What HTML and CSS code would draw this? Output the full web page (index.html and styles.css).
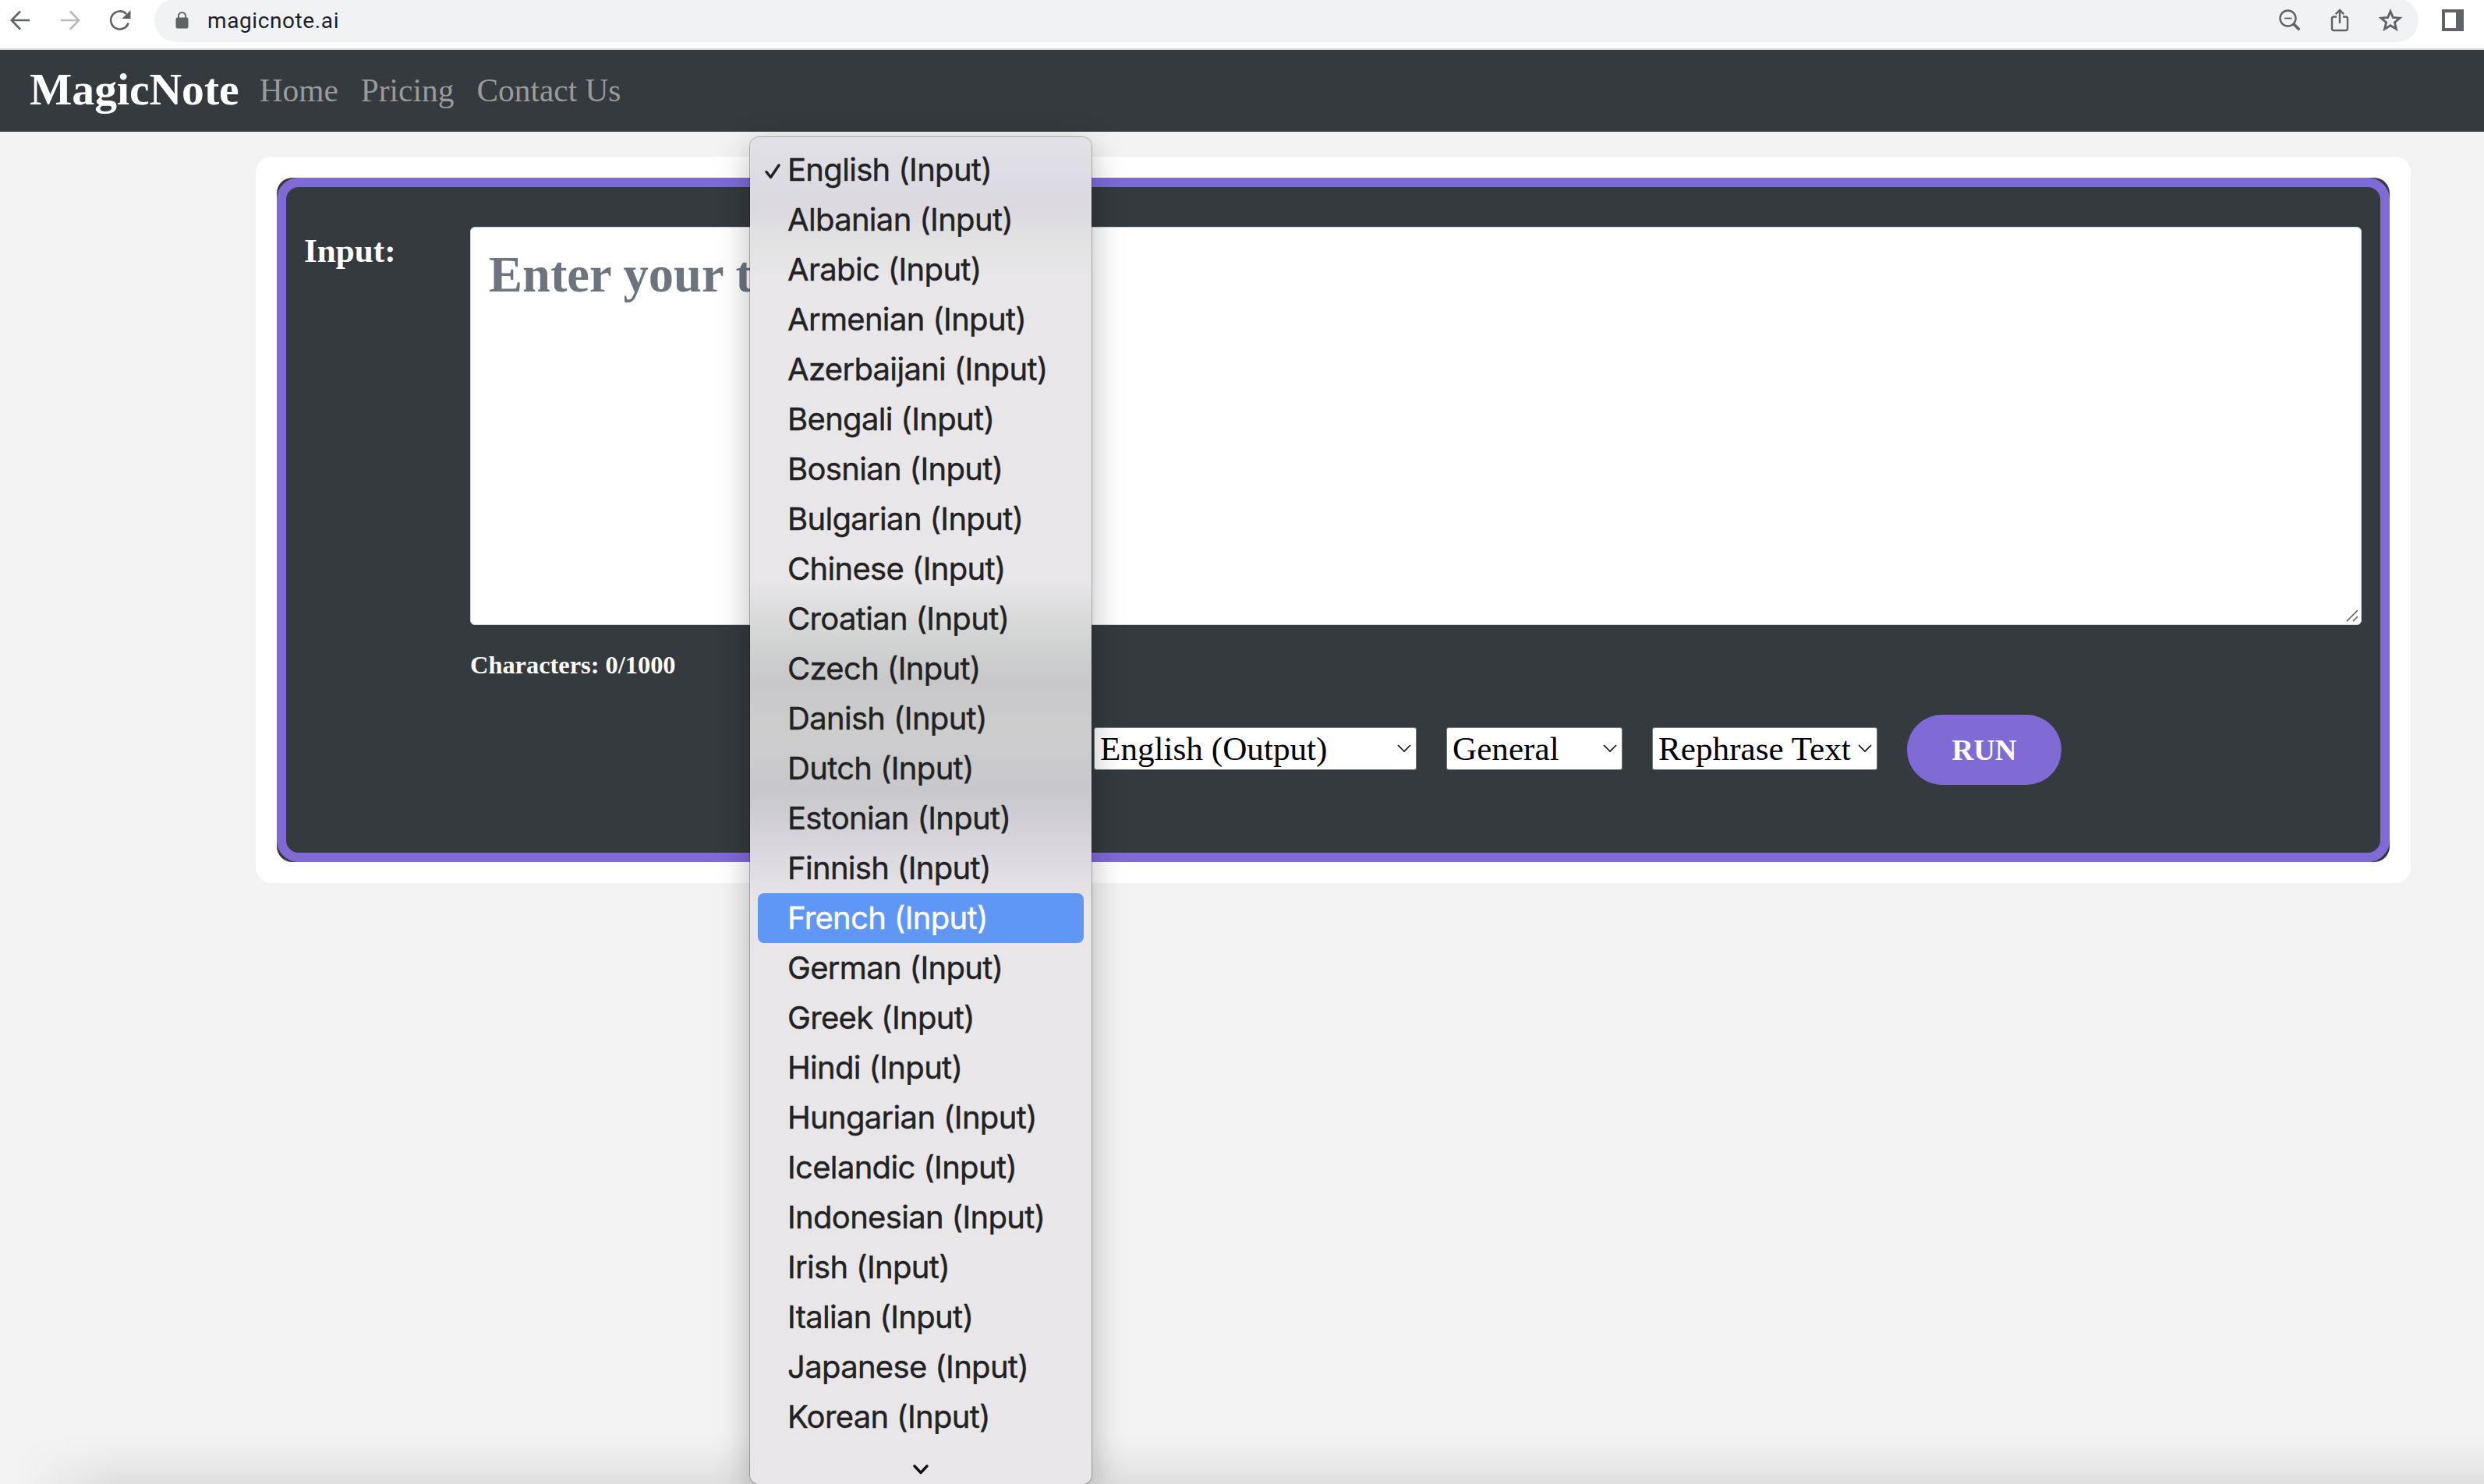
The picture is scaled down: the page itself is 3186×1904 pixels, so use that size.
FILE: index.html
```html
<!DOCTYPE html>
<html lang="en">
<head>
    <meta charset="UTF-8">
    <meta name="viewport" content="width=device-width, initial-scale=1.0">
    <title>MagicNote</title>
    <link rel="stylesheet" href="styles.css">
</head>
<body>
    <div class="browser-bar">
        <svg class="bar-icon" width="26" height="26" viewBox="0 0 26 26"><path d="M25 13H2M13 1.5L1.8 13L13 24.5"/></svg>
        <svg class="bar-icon forward" width="26" height="26" viewBox="0 0 26 26"><path d="M1 13h23M13 1.5L24.2 13L13 24.5"/></svg>
        <svg class="bar-icon reload" width="28" height="28" viewBox="0 0 28 28"><path d="M24.6 17.5A11.5 11.5 0 1 1 22 6"/><path class="solid" d="M27.5 1v11h-11z"/></svg>
        <div class="address">
            <svg class="lock" width="17" height="22" viewBox="0 0 17 22"><path d="M4 9V5.5a4.5 4.5 0 0 1 9 0V9"/><rect x="0.5" y="7.5" width="16" height="14" rx="2"/></svg>
            <span class="url">magicnote.ai</span>
            <div class="address-icons">
                <svg class="bar-icon" width="28" height="28" viewBox="0 0 28 28"><circle cx="11.5" cy="11.5" r="10" stroke-width="2.4"/><path stroke-width="1.8" d="M7 11.5h9.5"/><path stroke-width="3.6" d="M18.8 18.8l7.4 7.4"/></svg>
                <svg class="bar-icon" width="24" height="30" viewBox="0 0 24 30"><path stroke-width="2.4" d="M8 10.5H4.5a2.5 2.5 0 0 0-2.5 2.5V25.500a2.500 2.500 0 0 0 2.500 2.500h15a2.500 2.500 0 0 0 2.500-2.500V13a2.500 2.500 0 0 0-2.500-2.500H16M12 19V2.500M6.800 7.200L12 2l5.200 5.200"/></svg>
                <svg class="bar-icon" width="30" height="30" viewBox="0 0 30 30"><path stroke-width="2.8" d="M15 3.500l3.300 7.900 8.800.7-6.700 5.700 2.100 8.500L15 21.700l-7.500 4.600 2.100-8.500-6.700-5.700 8.800-.7z"/></svg>
            </div>
        </div>
        <div class="side-panel"></div>
    </div>

    <nav class="navbar">
        <a class="brand">MagicNote</a>
        <a class="nav-link">Home</a>
        <a class="nav-link">Pricing</a>
        <a class="nav-link">Contact Us</a>
    </nav>

    <main class="card">
        <div class="panel">
            <form class="panel-frame">
                <label class="input-label">Input:</label>
                <div class="input-column">
                    <div class="text-box">
                        Enter your t
                        <svg class="grip" width="16" height="16" viewBox="0 0 16 16"><path d="M1 15L15 1M9 15l6-6"/></svg>
                    </div>
                    <div class="counter">Characters: 0/1000</div>
                </div>
                <div class="controls">
                    <div class="input-language">
                        <ul class="menu">
                            <li class="checked"><svg class="check" width="20" height="20" viewBox="0 0 20 20"><path d="M2 10.500l5.500 7L18 2"/></svg>English (Input)</li>
                            <li>Albanian (Input)</li>
                            <li>Arabic (Input)</li>
                            <li>Armenian (Input)</li>
                            <li>Azerbaijani (Input)</li>
                            <li>Bengali (Input)</li>
                            <li>Bosnian (Input)</li>
                            <li>Bulgarian (Input)</li>
                            <li>Chinese (Input)</li>
                            <li>Croatian (Input)</li>
                            <li>Czech (Input)</li>
                            <li>Danish (Input)</li>
                            <li>Dutch (Input)</li>
                            <li>Estonian (Input)</li>
                            <li>Finnish (Input)</li>
                            <li class="active">French (Input)</li>
                            <li>German (Input)</li>
                            <li>Greek (Input)</li>
                            <li>Hindi (Input)</li>
                            <li>Hungarian (Input)</li>
                            <li>Icelandic (Input)</li>
                            <li>Indonesian (Input)</li>
                            <li>Irish (Input)</li>
                            <li>Italian (Input)</li>
                            <li>Japanese (Input)</li>
                            <li>Korean (Input)</li>
                            <li class="more"><svg width="20" height="14" viewBox="0 0 20 14"><path d="M2 2l8 8.500L18 2"/></svg></li>
                        </ul>
                    </div>
                    <div class="select output">English (Output)<svg width="18" height="10" viewBox="0 0 18 10"><path d="M1 1l8 8 8-8"/></svg></div>
                    <div class="select tone">General<svg width="18" height="10" viewBox="0 0 18 10"><path d="M1 1l8 8 8-8"/></svg></div>
                    <div class="select task">Rephrase Text<svg width="18" height="10" viewBox="0 0 18 10"><path d="M1 1l8 8 8-8"/></svg></div>
                    <button type="button" class="run">RUN</button>
                </div>
            </form>
        </div>
    </main>
    <div class="bottom-shade"></div>
</body>
</html>
```
FILE: styles.css
```css
* {
    box-sizing: border-box;
}

body {
    margin: 0;
    height: 1904px;
    overflow: hidden;
    position: relative;
    background: #f3f3f3;
    font-family: "Liberation Serif", "Times New Roman", serif;
}

svg {
    fill: none;
    flex-shrink: 0;
}

/* browser toolbar */
.browser-bar {
    height: 64px;
    padding: 0 26px 10px 13px;
    border-bottom: 2px solid #dadada;
    background: #fff;
    display: flex;
    align-items: center;
}

.bar-icon {
    stroke: #5f6368;
    stroke-width: 2.6;
}

.forward {
    margin-left: 38px;
    stroke: #bababa;
}

.reload {
    margin-left: 37px;
}

.solid {
    fill: #5f6368;
    stroke: none;
}

.address {
    flex: 1;
    height: 56px;
    margin: 0 30px 0 30px;
    padding: 0 21px 0 27px;
    border-radius: 28px;
    background: #f1f2f4;
    display: flex;
    align-items: center;
}

.lock {
    stroke: #5f6368;
    stroke-width: 2;
}

.lock rect {
    fill: #5f6368;
    stroke: none;
}

.url {
    margin-left: 24px;
    font: 28px Roboto, sans-serif;
    letter-spacing: 0.6px;
    color: #202124;
}

.address-icons {
    margin-left: auto;
    display: flex;
    align-items: center;
    gap: 38px;
}

.side-panel {
    width: 28px;
    height: 28px;
    border: 4px solid #5f6368;
    border-right-width: 10px;
}

/* site navigation */
.navbar {
    height: 105px;
    padding-left: 38px;
    background: #353a3e;
    display: flex;
    line-height: 102px;
}

.brand {
    margin-right: 26px;
    font-size: 57.6px;
    font-weight: bold;
    color: #fff;
}

.nav-link {
    margin-right: 29px;
    font-size: 41.4px;
    line-height: 104px;
    color: #989a9c;
}

/* main card */
.card {
    margin: 32px 94px 0 328px;
    padding: 27px;
    border-radius: 20px;
    background: #fff;
}

.panel {
    border-radius: 20px;
    background: #353a3e;
}

.panel-frame {
    height: 878px;
    padding: 51px 24px 0;
    border: 12px solid #806ad6;
    border-radius: 28px;
    display: grid;
    grid-template-columns: 212px 1fr;
    grid-template-rows: 626px 90px;
    color: #fff;
}

.input-label {
    margin-left: -1px;
    padding-top: 6px;
    font-size: 43.2px;
    font-weight: bold;
}

.text-box {
    position: relative;
    height: 511px;
    padding: 24px 23px;
    border: 1px solid #ced4da;
    border-radius: 6px;
    background: #fff;
    color: #6c757d;
    font-size: 64.5px;
    font-weight: bold;
    line-height: 74px;
}

.grip {
    position: absolute;
    right: 3px;
    bottom: 3px;
    stroke: #555;
    stroke-width: 1.5;
}

.counter {
    margin-top: 33px;
    font-size: 32.4px;
    font-weight: bold;
}

.controls {
    grid-column: 1 / 3;
    padding-left: 571px;
    display: flex;
    align-items: center;
    gap: 38px;
}

.select {
    height: 55px;
    margin-bottom: 3px;
    padding: 0 6px 1px 7px;
    border: 1px solid #767676;
    border-radius: 3px;
    background: #fff;
    color: #000;
    font-size: 43.2px;
    white-space: nowrap;
    display: flex;
    align-items: center;
    justify-content: space-between;
}

.select svg {
    stroke: #000;
    stroke-width: 1.6;
}

.output {
    width: 414px;
    margin-left: -1px;
}

.tone {
    width: 226px;
}

.task {
    width: 289px;
}

.run {
    width: 198px;
    height: 90px;
    border: none;
    border-radius: 45px;
    background: #806ad6;
    color: #fff;
    font: bold 38.4px "Liberation Serif", serif;
}

/* opened language list */
.input-language {
    position: relative;
    width: 404px;
    height: 55px;
}

.menu {
    position: absolute;
    top: -759px;
    left: 0;
    width: 438px;
    height: 1728px;
    margin: 0;
    padding: 10px 10px 0;
    list-style: none;
    border-radius: 12px;
    background: linear-gradient(#e2e1e7 0, #dddce4 50px, #dbd9df 90px, #e3e3e4 140px, #e8e6e8 180px, #e8e6e8 570px, #d3d4d4 640px, #c8c8ca 700px, #cdcdce 765px, #c8c7cc 840px, #dddbe1 930px, #e8e6e8 985px);
    box-shadow: 0 0 0 1px rgba(0, 0, 0, 0.25), 0 12px 44px rgba(0, 0, 0, 0.28);
    color: #222;
    font: 40px Inter, sans-serif;
    letter-spacing: -0.68px;
    -webkit-text-stroke: 0.4px;
    z-index: 2;
}

.menu li {
    position: relative;
    height: 64px;
    padding-left: 38px;
    line-height: 63px;
    white-space: nowrap;
}

.check {
    position: absolute;
    left: 9px;
    top: 24px;
    stroke: #222;
    stroke-width: 3.4;
    stroke-linecap: round;
    stroke-linejoin: round;
}

.menu .active {
    border-radius: 8px;
    background: #5f97f7;
    color: #fff;
}

.menu .more {
    height: 48px;
    padding: 29px 0 0;
    display: flex;
    justify-content: center;
    align-items: flex-start;
}

.more svg {
    stroke: #111;
    stroke-width: 3.4;
    stroke-linecap: round;
    stroke-linejoin: round;
}

/* shadow of the window below */
.bottom-shade {
    position: absolute;
    left: 0;
    right: 0;
    bottom: 0;
    height: 64px;
    background: linear-gradient(transparent, rgba(0, 0, 0, 0.02) 35%, rgba(0, 0, 0, 0.08));
    -webkit-mask-image: linear-gradient(to right, transparent 20px, #000 150px);
    mask-image: linear-gradient(to right, transparent 20px, #000 150px);
}
```
